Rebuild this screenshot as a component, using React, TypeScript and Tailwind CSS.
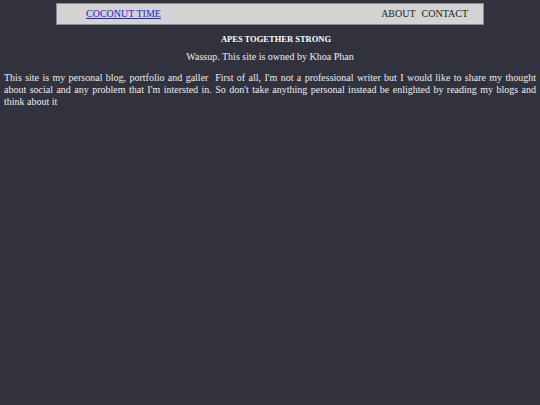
import React from "react";

export default function App() {
  return (
    <div className="min-h-[405px] bg-[#32323e] font-['Liberation_Serif',serif] text-[10px] leading-[12px] text-[#ececec] pt-[3px] px-[4px]">
      <nav className="mx-auto w-[428px] h-[22px] border border-[#8a8a8a] bg-[#d3d3d3] flex items-center justify-between pl-[29px] pr-[15px]">
        <a href="#" className="text-[#2222dd] underline">COCONUT TIME</a>
        <div className="flex gap-[6px] text-[#222222]">
          <span>ABOUT</span>
          <span>CONTACT</span>
        </div>
      </nav>
      <h5 className="mt-[9px] pl-[12px] text-center font-bold text-[8.5px] leading-[10px] text-white">APES TOGETHER STRONG</h5>
      <p className="mt-[7px] text-center">Wassup. This site is owned by Khoa Phan</p>
      <p className="mt-[9px] text-justify">
        This site is my personal blog, portfolio and galler{"\u00a0"} First of all, I'm not a professional writer but I would like to share my thought about social and any problem that I'm intersted in. So don't take anything personal instead be enlighted by reading my blogs and think about it
      </p>
    </div>
  );
}
